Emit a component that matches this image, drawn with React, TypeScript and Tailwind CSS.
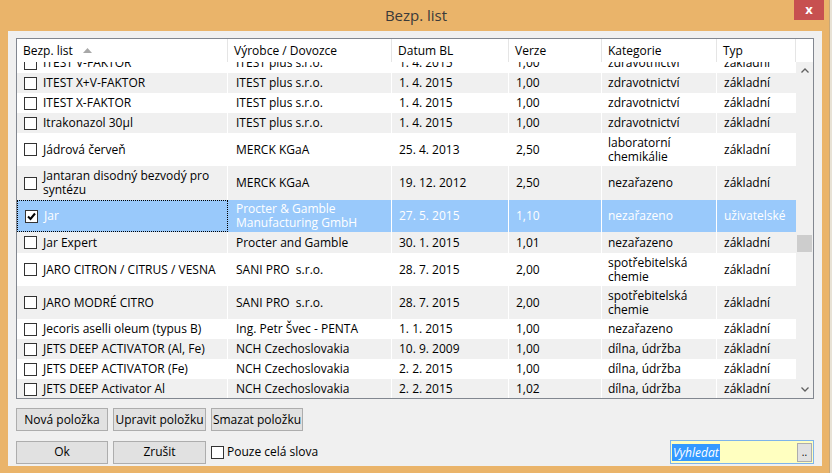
import React from "react";

type Row = {
  name: string[];
  vyr: string[];
  datum: string;
  verze: string;
  kat: string[];
  typ: string;
  h: string;
  checked?: boolean;
  selected?: boolean;
};

const rows: Row[] = [
  { name: ["ITEST V-FAKTOR"], vyr: ["ITEST plus s.r.o."], datum: "1. 4. 2015", verze: "1,00", kat: ["zdravotnictví"], typ: "základní", h: "h-[20px]" },
  { name: ["ITEST X+V-FAKTOR"], vyr: ["ITEST plus s.r.o."], datum: "1. 4. 2015", verze: "1,00", kat: ["zdravotnictví"], typ: "základní", h: "h-[20px]" },
  { name: ["ITEST X-FAKTOR"], vyr: ["ITEST plus s.r.o."], datum: "1. 4. 2015", verze: "1,00", kat: ["zdravotnictví"], typ: "základní", h: "h-[20px]" },
  { name: ["Itrakonazol 30µl"], vyr: ["ITEST plus s.r.o."], datum: "1. 4. 2015", verze: "1,00", kat: ["zdravotnictví"], typ: "základní", h: "h-[20px]" },
  { name: ["Jádrová červeň"], vyr: ["MERCK KGaA"], datum: "25. 4. 2013", verze: "2,50", kat: ["laboratorní", "chemikálie"], typ: "základní", h: "h-[33px]" },
  { name: ["Jantaran disodný bezvodý pro", "syntézu"], vyr: ["MERCK KGaA"], datum: "19. 12. 2012", verze: "2,50", kat: ["nezařazeno"], typ: "základní", h: "h-[34px]" },
  { name: ["Jar"], vyr: ["Procter & Gamble", "Manufacturing GmbH"], datum: "27. 5. 2015", verze: "1,10", kat: ["nezařazeno"], typ: "uživatelské", h: "h-[32px]", checked: true, selected: true },
  { name: ["Jar Expert"], vyr: ["Procter and Gamble"], datum: "30. 1. 2015", verze: "1,01", kat: ["nezařazeno"], typ: "základní", h: "h-[21px]" },
  { name: ["JARO CITRON / CITRUS / VESNA"], vyr: ["SANI PRO  s.r.o."], datum: "28. 7. 2015", verze: "2,00", kat: ["spotřebitelská", "chemie"], typ: "základní", h: "h-[33px]" },
  { name: ["JARO MODRÉ CITRO"], vyr: ["SANI PRO  s.r.o."], datum: "28. 7. 2015", verze: "2,00", kat: ["spotřebitelská", "chemie"], typ: "základní", h: "h-[33px]" },
  { name: ["Jecoris aselli oleum (typus B)"], vyr: ["Ing. Petr Švec - PENTA"], datum: "1. 1. 2015", verze: "1,00", kat: ["nezařazeno"], typ: "základní", h: "h-[20px]" },
  { name: ["JETS DEEP ACTIVATOR (Al, Fe)"], vyr: ["NCH Czechoslovakia"], datum: "10. 9. 2009", verze: "1,00", kat: ["dílna, údržba"], typ: "základní", h: "h-[20px]" },
  { name: ["JETS DEEP ACTIVATOR (Fe)"], vyr: ["NCH Czechoslovakia"], datum: "2. 2. 2015", verze: "1,00", kat: ["dílna, údržba"], typ: "základní", h: "h-[20px]" },
  { name: ["JETS DEEP Activator Al"], vyr: ["NCH Czechoslovakia"], datum: "2. 2. 2015", verze: "1,02", kat: ["dílna, údržba"], typ: "základní", h: "h-[20px]" },
];

function Lines({ lines }: { lines: string[] }) {
  return (
    <div className="leading-[14px] whitespace-pre">
      {lines.map((l, i) => (
        <div key={i}>{l}</div>
      ))}
    </div>
  );
}

function CheckBox({ checked, big }: { checked?: boolean; big?: boolean }) {
  return (
    <div
      className={`${big ? "w-[13px] h-[13px] border-[#333]" : "w-[13px] h-[13px] border-[#333]"} shrink-0 border bg-white flex items-center justify-center`}
    >
      {checked && (
        <svg width="9" height="9" viewBox="0 0 9 9">
          <path d="M1 4.5 L3.5 7 L8 1.5" stroke="#000" strokeWidth="2" fill="none" />
        </svg>
      )}
    </div>
  );
}

function Chevron({ up }: { up?: boolean }) {
  return (
    <svg width="8" height="5" viewBox="0 0 8 5">
      <path
        d={up ? "M0.5 4.5 L4 1 L7.5 4.5" : "M0.5 0.5 L4 4 L7.5 0.5"}
        stroke="#606060"
        strokeWidth="1.3"
        fill="none"
      />
    </svg>
  );
}

function Btn({ label, w }: { label: string; w: string }) {
  return (
    <div
      className={`${w} h-[23px] bg-[#e1e1e1] border border-[#adadad] flex items-center justify-center text-black`}
    >
      {label}
    </div>
  );
}

export default function App() {
  return (
    <div
      className="w-[832px] h-[473px] flex bg-[#e6dccb] text-[12px] text-black overflow-hidden"
      style={{ fontFamily: "'Segoe UI', 'Open Sans', 'Noto Sans', sans-serif" }}
    >
      <div className="w-[829px] h-full bg-[#eab46a] flex flex-col pl-[8px] pr-[7px] pb-[7px]">
        {/* title bar */}
        <div className="h-[31px] shrink-0 relative flex items-center justify-center">
          <div className="text-[15px] text-[#3a3a3a] pb-[1px] pl-[2px]">Bezp. list</div>
          <div className="absolute top-0 right-[-2px] w-[30px] h-[20px] bg-[#c75050] flex items-center justify-center text-white text-[13px] font-bold leading-none pb-[2px]">
            x
          </div>
        </div>

        {/* client */}
        <div className="flex-1 bg-[#f0f0f0] flex flex-col pt-[7px] px-[8px]">
          <div className="w-[798px] h-[361px] border border-[#828790] bg-white flex flex-col">
            {/* header */}
            <div className="h-[23px] shrink-0 flex bg-white">
              <div className="w-[211px] border-r border-[#e5e5e5] pl-[6px] flex items-center gap-[10px]">
                <span>Bezp. list</span>
                <svg width="9" height="5" viewBox="0 0 9 5">
                  <path d="M0 5 L4.5 0 L9 5 Z" fill="#a8a8a8" />
                </svg>
              </div>
              <div className="w-[164px] border-r border-[#e5e5e5] pl-[6px] flex items-center">Výrobce / Dovozce</div>
              <div className="w-[117px] border-r border-[#e5e5e5] pl-[6px] flex items-center">Datum BL</div>
              <div className="w-[93px] border-r border-[#e5e5e5] pl-[6px] flex items-center">Verze</div>
              <div className="w-[115px] border-r border-[#e5e5e5] pl-[6px] flex items-center">Kategorie</div>
              <div className="w-[79px] border-r border-[#e5e5e5] pl-[6px] flex items-center">Typ</div>
              <div className="flex-1" />
            </div>

            {/* body */}
            <div className="flex-1 flex overflow-hidden">
              <div className="w-[779px] overflow-hidden">
                <div className="-mt-[9px]">
                  {rows.map((r, i) => {
                    const bg = r.selected ? "bg-[#99c9fb] text-white" : i % 2 === 1 ? "bg-[#f0f0f0]" : "bg-white";
                    return (
                      <div key={i} className={`${r.h} flex ${bg}`}>
                        <div
                          className={`w-[211px] flex items-center pl-[7px] gap-[6px] ${r.selected ? "border border-dotted border-black" : "border-r border-white"}`}
                        >
                          <CheckBox checked={r.checked} />
                          <Lines lines={r.name} />
                        </div>
                        <div className="w-[164px] flex items-center pl-[8px] border-r border-white">
                          <Lines lines={r.vyr} />
                        </div>
                        <div className="w-[117px] flex items-center pl-[7px] border-r border-white">{r.datum}</div>
                        <div className="w-[93px] flex items-center pl-[7px] border-r border-white">{r.verze}</div>
                        <div className="w-[115px] flex items-center pl-[6px] border-r border-white">
                          <Lines lines={r.kat} />
                        </div>
                        <div className="w-[79px] flex items-center pl-[7px]">{r.typ}</div>
                      </div>
                    );
                  })}
                </div>
              </div>
              {/* scrollbar */}
              <div className="w-[17px] bg-[#f0f0f0] flex flex-col items-center">
                <div className="h-[17px] shrink-0 flex items-center justify-center">
                  <Chevron up />
                </div>
                <div className="mt-[156px] w-[15px] h-[17px] bg-[#cdcdcd]" />
                <div className="flex-1" />
                <div className="h-[17px] shrink-0 flex items-center justify-center">
                  <Chevron />
                </div>
              </div>
            </div>
          </div>

          {/* buttons row 1 */}
          <div className="flex gap-[5px] mt-[9px]">
            <Btn label="Nová položka" w="w-[92px]" />
            <Btn label="Upravit položku" w="w-[93px]" />
            <Btn label="Smazat položku" w="w-[92px]" />
          </div>

          {/* buttons row 2 */}
          <div className="flex gap-[5px] mt-[9px] items-center">
            <Btn label="Ok" w="w-[92px]" />
            <Btn label="Zrušit" w="w-[93px]" />
            <div className="flex items-center gap-[3px]">
              <div className="w-[13px] h-[13px] border border-[#333] bg-white" />
              <span>Pouze celá slova</span>
            </div>
            <div className="ml-auto w-[144px] h-[24px] border border-[#7eb4ea] bg-[#ffffc0] flex items-center pl-[1px] pr-[1px]">
              <span className="bg-[#3399ff] text-white italic leading-[17px] px-[1px]">Vyhledat</span>
              <div className="ml-auto w-[15px] h-[19px] bg-[#e1e1e1] border border-[#adadad] flex items-center justify-center text-[10px] leading-none">
                ..
              </div>
            </div>
          </div>
        </div>
      </div>
      <div className="flex-1 bg-[#e8e2d6] border-l border-[#c9a878]" />
    </div>
  );
}
